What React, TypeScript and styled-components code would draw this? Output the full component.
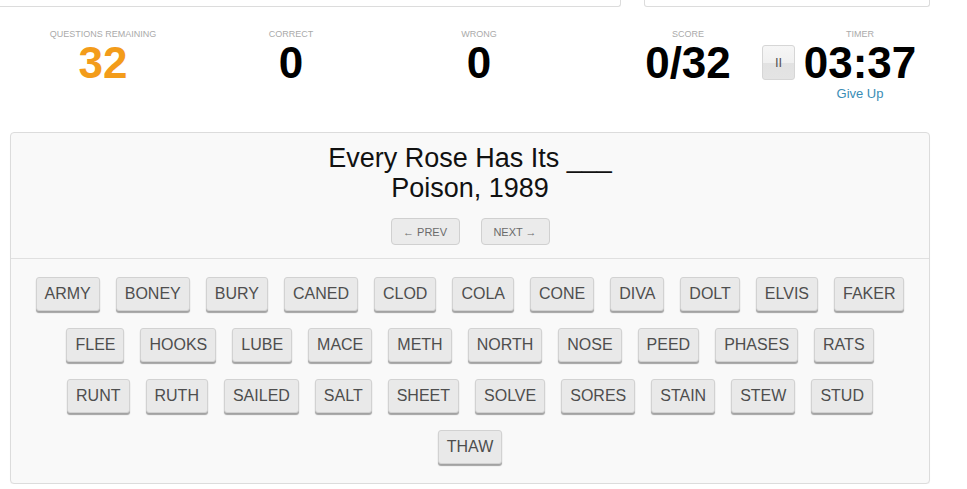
import * as React from "react";
import styled, { createGlobalStyle } from "styled-components";

const GlobalStyle = createGlobalStyle`
    html, body {
        margin: 0;
        padding: 0;
        background: #fff;
        font-family: "Liberation Sans", Arial, sans-serif;
    }
`;

const Page = styled.div`
    width: 967px;
    overflow: hidden;
`;

const TopStrip = styled.div`
    display: flex;
    gap: 23px;
    margin-left: -5px;
    width: 936px;
`;

const TopPanel = styled.div<{ $width: number }>`
    width: ${({ $width }) => $width}px;
    height: 6px;
    border: 1px solid #dcdcdc;
    border-top: none;
    border-radius: 0 0 3px 3px;
    box-sizing: content-box;
`;

const StatsRow = styled.div`
    display: flex;
    padding-left: 9px;
    margin-top: 22px;
    height: 73px;
`;

const Stat = styled.div<{ $width: number; $offset?: number }>`
    position: relative;
    width: ${({ $width }) => $width}px;
    margin-left: ${({ $offset }) => $offset || 0}px;
    display: flex;
    flex-direction: column;
    align-items: center;
`;

const StatLabel = styled.div`
    font-size: 9px;
    line-height: 11px;
    color: #aaa;
    text-transform: uppercase;
`;

const StatValue = styled.div<{ $accent?: boolean }>`
    margin-top: 1px;
    font-size: 44px;
    line-height: 44px;
    font-weight: bold;
    color: ${({ $accent }) => ($accent ? "#f39c1a" : "#000")};
`;

const PauseButton = styled.button`
    position: absolute;
    left: -38px;
    top: 16px;
    width: 33px;
    height: 35px;
    padding: 0;
    border: 1px solid #d6d6d6;
    border-radius: 3px;
    background: linear-gradient(#f6f6f6, #f0f0f0 50%, #e2e2e2 50%, #e4e4e4);
    color: #555;
    font-family: "Liberation Sans", Arial, sans-serif;
    font-size: 13px;
    cursor: pointer;
`;

const GiveUp = styled.a`
    margin-top: 1px;
    font-size: 13px;
    line-height: 15px;
    color: #3a8db5;
    text-decoration: none;
    cursor: pointer;
`;

const QuizBox = styled.div`
    margin: 30px 0 0 10px;
    width: 918px;
    border: 1px solid #dcdcdc;
    border-radius: 4px;
    background: #f9f9f9;
    box-shadow: 0 1px 1px rgba(0, 0, 0, 0.04);
`;

const QuestionArea = styled.div`
    padding: 10px 0 13px;
    border-bottom: 1px solid #e0e0e0;
    display: flex;
    flex-direction: column;
    align-items: center;
`;

const Prompt = styled.div`
    font-size: 27px;
    line-height: 30px;
    color: #111;
    text-align: center;
`;

const NavRow = styled.div`
    display: flex;
    gap: 21px;
    margin-top: 15px;
`;

const NavButton = styled.button`
    width: 69px;
    height: 27px;
    padding: 0;
    border: 1px solid #d0d0d0;
    border-radius: 4px;
    background: #ebebeb;
    color: #6a6a6a;
    font-family: "Liberation Sans", Arial, sans-serif;
    font-size: 11px;
    cursor: pointer;
`;

const WordArea = styled.div`
    padding: 18px 0 19px;
    display: flex;
    flex-direction: column;
    gap: 17px;
`;

const WordRow = styled.div`
    display: flex;
    justify-content: center;
    gap: 16px;
`;

const WordButton = styled.button`
    height: 34px;
    padding: 0 8px;
    border: 1px solid #d2d2d2;
    border-radius: 3px;
    background: #e9e9e9;
    box-shadow: 0 2px 1px rgba(0, 0, 0, 0.35);
    color: #4e4e4e;
    font-family: "Liberation Sans", Arial, sans-serif;
    font-size: 16px;
    cursor: pointer;
`;

const wordRows = [
    ["ARMY", "BONEY", "BURY", "CANED", "CLOD", "COLA", "CONE", "DIVA", "DOLT", "ELVIS", "FAKER"],
    ["FLEE", "HOOKS", "LUBE", "MACE", "METH", "NORTH", "NOSE", "PEED", "PHASES", "RATS"],
    ["RUNT", "RUTH", "SAILED", "SALT", "SHEET", "SOLVE", "SORES", "STAIN", "STEW", "STUD"],
    ["THAW"],
];

const App = () => {
    return (
        <Page>
            <GlobalStyle />
            <TopStrip>
                <TopPanel $width={624} />
                <TopPanel $width={284} />
            </TopStrip>

            <StatsRow>
                <Stat $width={188}>
                    <StatLabel>Questions Remaining</StatLabel>
                    <StatValue $accent>32</StatValue>
                </Stat>
                <Stat $width={188}>
                    <StatLabel>Correct</StatLabel>
                    <StatValue>0</StatValue>
                </Stat>
                <Stat $width={188}>
                    <StatLabel>Wrong</StatLabel>
                    <StatValue>0</StatValue>
                </Stat>
                <Stat $width={110} $offset={60}>
                    <StatLabel>Score</StatLabel>
                    <StatValue>0/32</StatValue>
                </Stat>
                <Stat $width={120} $offset={57}>
                    <StatLabel>Timer</StatLabel>
                    <StatValue>03:37</StatValue>
                    <PauseButton>II</PauseButton>
                    <GiveUp>Give Up</GiveUp>
                </Stat>
            </StatsRow>

            <QuizBox>
                <QuestionArea>
                    <Prompt>
                        Every Rose Has Its ___
                        <br />
                        Poison, 1989
                    </Prompt>
                    <NavRow>
                        <NavButton>&larr; PREV</NavButton>
                        <NavButton>NEXT &rarr;</NavButton>
                    </NavRow>
                </QuestionArea>
                <WordArea>
                    {wordRows.map((row, idx) => (
                        <WordRow key={idx}>
                            {row.map((word) => (
                                <WordButton key={word}>{word}</WordButton>
                            ))}
                        </WordRow>
                    ))}
                </WordArea>
            </QuizBox>
        </Page>
    );
};

export default App;
